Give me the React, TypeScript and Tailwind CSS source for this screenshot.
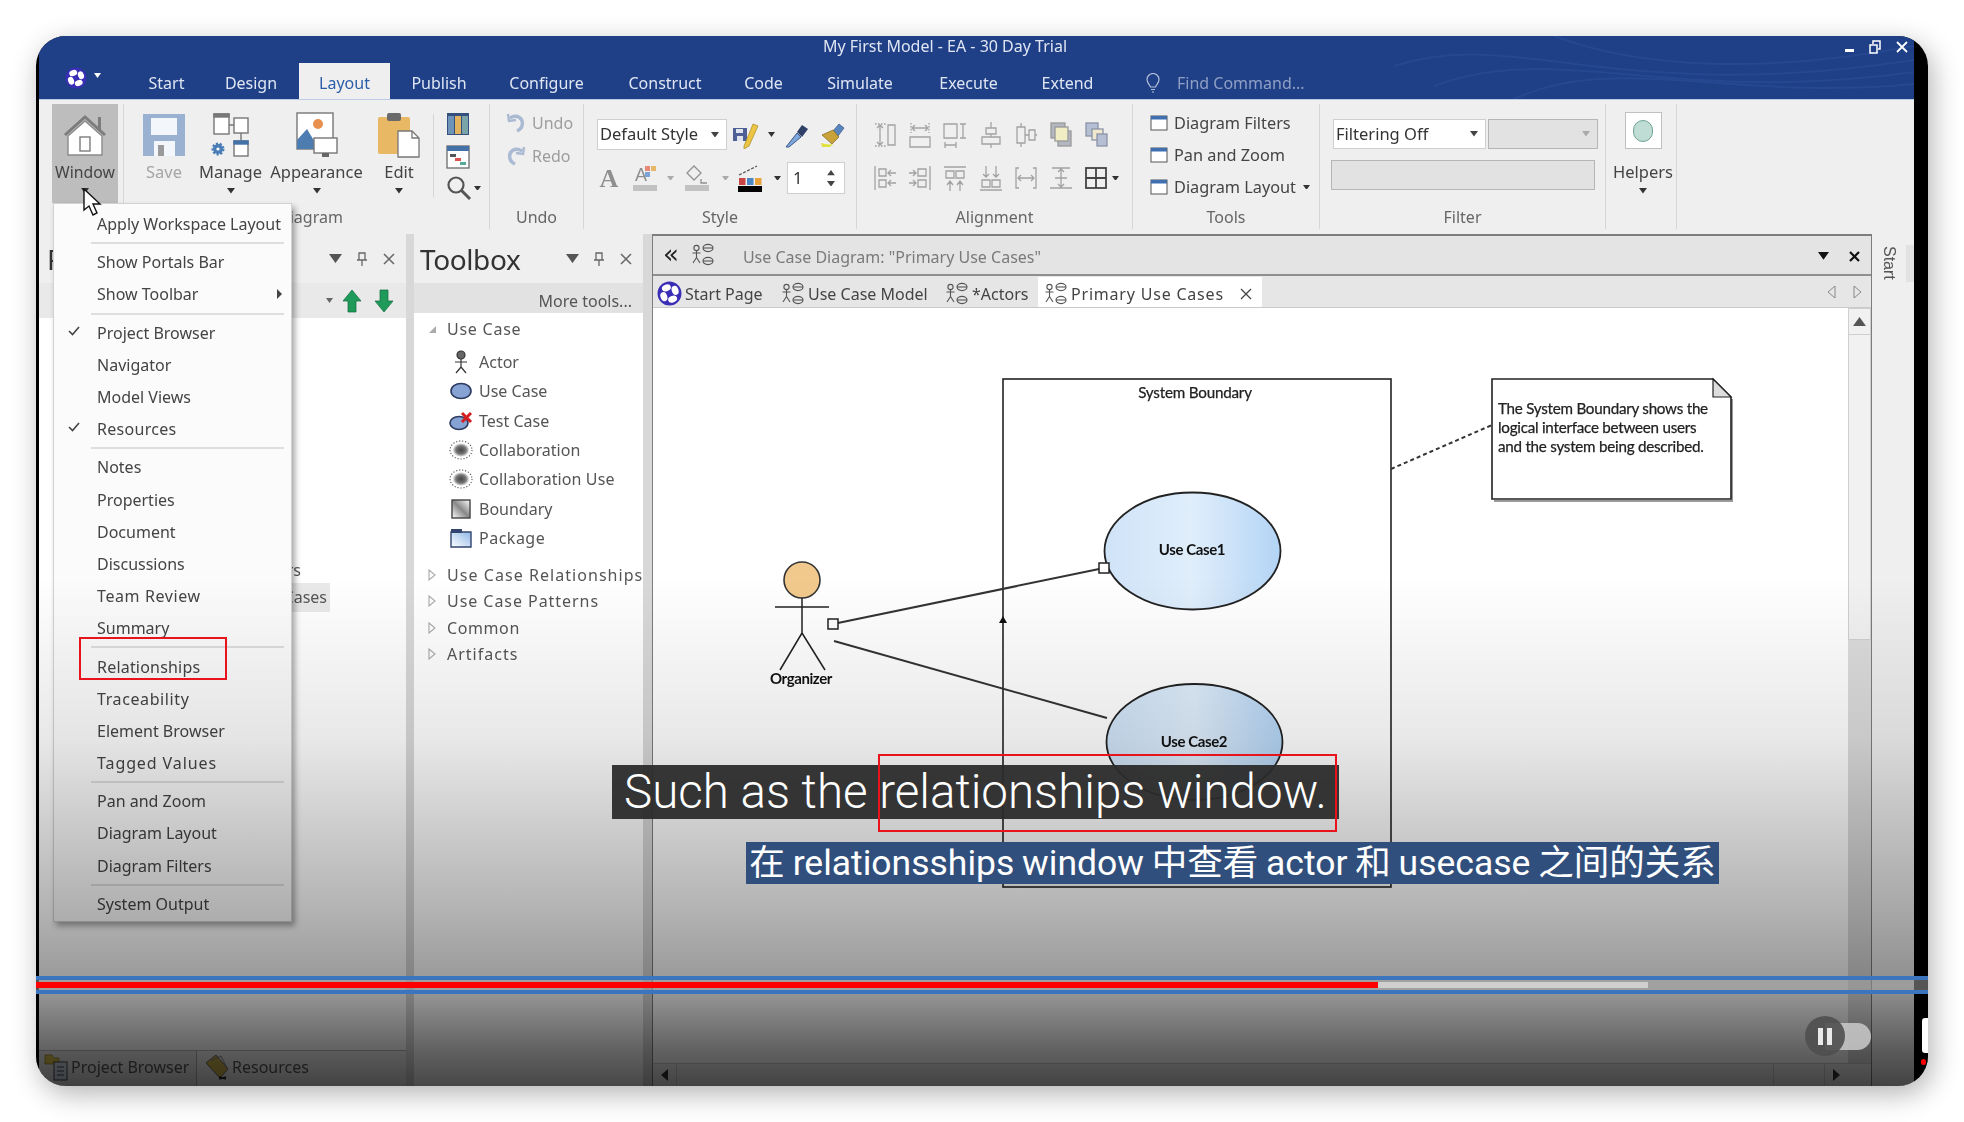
import type { ReactNode } from 'react'

const UI = "font-['Noto_Sans',sans-serif]"

// ── Small drawings ────────────────────────────────────────────────────────────

function Caret({ color = '#333', size = 8 }: { color?: string; size?: number }) {
  return (
    <svg width={size} height={size * 0.7} viewBox="0 0 8 5.6" className="shrink-0">
      <path d="M0 0h8L4 5.6z" fill={color} />
    </svg>
  )
}

function EaLogo({ size = 24 }: { size?: number }) {
  return (
    <svg width={size} height={size} viewBox="0 0 24 24" className="shrink-0">
      <circle cx="12" cy="12" r="11.5" fill="#3b2eb6" />
      <g fill="#fff">
        <ellipse cx="9" cy="6.6" rx="4.4" ry="3.2" transform="rotate(-20 9 6.6)" />
        <ellipse cx="17.4" cy="9" rx="3.2" ry="4.4" transform="rotate(-20 17.4 9)" />
        <ellipse cx="15" cy="17.4" rx="4.4" ry="3.2" transform="rotate(-20 15 17.4)" />
        <ellipse cx="6.6" cy="15" rx="3.2" ry="4.4" transform="rotate(-20 6.6 15)" />
      </g>
    </svg>
  )
}

function DiagIcon({ size = 24 }: { size?: number }) {
  return (
    <svg width={size} height={size} viewBox="0 0 24 24" className="shrink-0" fill="none" stroke="#555" strokeWidth="1.1">
      <circle cx="5.5" cy="5" r="2.6" />
      <path d="M5.5 7.6v7M1.5 10h8M5.5 14.5L2 20M5.5 14.5L9 20" />
      <ellipse cx="17" cy="5" rx="5" ry="3.6" />
      <path d="M12 5h10" />
      <ellipse cx="17" cy="18" rx="5" ry="3.6" />
      <path d="M12 18h10" />
    </svg>
  )
}

function WinIcon() {
  return (
    <svg width="18" height="18" viewBox="0 0 18 18" className="shrink-0">
      <rect x="1" y="2" width="16" height="14" fill="#fff" stroke="#555" />
      <rect x="1" y="2" width="16" height="3.5" fill="#3f6fb0" />
    </svg>
  )
}

const AlignTop: ReactNode[] = [
  <>
    <path d="M2 4h11M2 26h11" strokeDasharray="1.6 1.4" />
    <path d="M7 5v20M4 8l3-3 3 3M4 22l3 3 3-3M15 5h7v20h-7z" />
  </>,
  <>
    <path d="M3 3v10M21 3v10" strokeDasharray="1.6 1.4" />
    <path d="M4 8h16M7 5l-3 3 3 3M17 5l3 3-3 3M2 17h20v10H2z" />
  </>,
  <path d="M1 4h13v14H1zM17 4h6M20 4v14M17 18h6M2 22v6M13 22v6M2 25h11" />,
  <path d="M12 2v6M12 14v3M12 24v4M7 8h10v6H7zM3 17h18v7H3z" />,
  <path d="M7 3v4M7 23v4M3 7h8v16H3zM11 15h4M15 10h6v10h-6zM21 15h2" />,
  <>
    <rect x="2" y="3" width="14" height="15" fill="#b3b7c0" stroke="#999" />
    <rect x="9" y="11" width="13" height="15" fill="#b3b7c0" stroke="#999" />
    <rect x="6" y="7" width="13" height="14" fill="#f0ecc4" stroke="#999" />
  </>,
  <>
    <rect x="2" y="3" width="12" height="13" fill="#b4bfd4" stroke="#8a93a6" />
    <rect x="8" y="9" width="11" height="11" fill="#efe8cf" stroke="#8a93a6" />
    <rect x="13" y="14" width="10" height="12" fill="#b4bfd4" stroke="#8a93a6" />
  </>,
]
const AlignBottom: ReactNode[] = [
  <path d="M2 3v24M6 6h7v7H6zM6 17h7v7H6zM15 10h8M15 20h8M18 7l-3 3 3 3M18 17l-3 3 3 3" />,
  <path d="M22 3v24M10 6h8v7h-8zM10 17h8v7h-8zM1 10h7M1 20h7M5 7l3 3-3 3M5 17l3 3-3 3" />,
  <path d="M1 4h22M3 8h8v7H3zM13 8h8v7h-8zM7 18v10M17 18v10M4 22l3-4 3 4M14 22l3-4 3 4" />,
  <path d="M1 27h22M3 17h8v7H3zM13 17h8v7h-8zM7 3v11M17 3v11M4 11l3 3 3-3M14 11l3 3 3-3" />,
  <path d="M5 5H2v20h3M19 5h3v20h-3M4 15h16M7 12l-3 3 3 3M17 12l3 3-3 3" />,
  <path d="M3 5h3l6 0 6 0h3M1 25h22M12 6v18M9 9l3-3 3 3M9 21l3 3 3-3M6 15h12" />,
]

function AlignIcon({ children }: { children: ReactNode }) {
  return (
    <svg width="24" height="30" viewBox="0 0 24 30" fill="none" stroke="#a2a2a2" strokeWidth="1.3" className="shrink-0">
      {children}
    </svg>
  )
}

function LargeButton({ label, width, icon, muted, caret = true, small }: { label: string; width: number; icon: ReactNode; muted?: boolean; caret?: boolean; small?: boolean }) {
  return (
    <div style={{ width }} className="flex flex-col items-center pt-[9px] shrink-0">
      <div className="h-[44px] flex items-center justify-center">{icon}</div>
      <div className={`mt-[4px] h-[22px] leading-[22px] whitespace-nowrap ${small ? 'text-[15.8px]' : 'text-[16.5px]'} ${muted ? 'text-[#a5a5a5]' : 'text-[#444]'}`}>{label}</div>
      {caret && <div className="mt-[5px]"><Caret /></div>}
    </div>
  )
}

function Group({ width, label, pl = 0, children }: { width: number; label?: string; pl?: number; children: ReactNode }) {
  return (
    <div style={{ width }} className="shrink-0 mt-[4px] mb-[6px] h-[125px] border-r border-[#d6d6d6] flex flex-col">
      <div className="h-[103px]">{children}</div>
      <div style={{ paddingLeft: pl }} className="h-[21px] leading-[21px] text-center text-[16px] text-[#666]">{label}</div>
    </div>
  )
}

function Combo({ text, width, disabled, h = 30 }: { text?: string; width: number; disabled?: boolean; h?: number }) {
  return (
    <div
      style={{ width, height: h }}
      className={`shrink-0 flex items-center justify-between pl-[2px] pr-[7px] border text-[16.5px] text-[#333] ${disabled ? 'bg-[#e2e2e2] border-[#b5b5b5]' : 'bg-white border-[#cfcfcf]'}`}
    >
      <span className="whitespace-nowrap">{text}</span>
      <Caret color={disabled ? '#aaa' : '#444'} />
    </div>
  )
}

// ── Title bar ─────────────────────────────────────────────────────────────────

const ribbonTabs: [string, number][] = [
  ['Start', 73], ['Design', 96], ['Layout', 91], ['Publish', 98], ['Configure', 117],
  ['Construct', 120], ['Code', 77], ['Simulate', 116], ['Execute', 101], ['Extend', 97],
]

function TitleBar() {
  return (
    <div className="relative h-[63px] bg-[#1f3f87] shrink-0 overflow-hidden">
      <svg className="absolute right-0 top-0" width="520" height="63" viewBox="0 0 520 63" fill="none" stroke="#264890" strokeWidth="2">
        <path d="M0 30C120 -10 220 70 520 24" />
        <path d="M40 50C160 4 280 70 520 36" />
        <path d="M120 63C220 16 340 66 520 48" />
        <path d="M160 0C240 30 360 40 520 10" />
      </svg>
      <div className="relative h-[27px] flex items-start justify-center pr-[63px] leading-[21px] text-[16px] text-[#dfe6f2]">
        My First Model - EA - 30 Day Trial
        <div className="absolute right-[6px] top-0 h-[22px] flex items-center gap-[15px] text-white">
          <div className="w-[9px] h-[3px] bg-white mt-[6px]" />
          <svg width="12" height="14" viewBox="0 0 12 14" fill="none" stroke="#fff" strokeWidth="1.5">
            <rect x="1" y="5" width="7" height="8" />
            <path d="M4 4V1h7v8H9" />
          </svg>
          <svg width="12" height="12" viewBox="0 0 12 12" stroke="#fff" strokeWidth="1.8"><path d="M1 1l10 10M11 1L1 11" /></svg>
        </div>
      </div>
      <div className="relative h-[36px] flex text-[16px] text-[#dfe6f2]">
        <div className="w-[91px] shrink-0 flex items-start pl-[26px] pt-[4px] gap-[7px]">
          <EaLogo size={22} />
          <div className="mt-[6px]"><Caret color="#fff" size={7} /></div>
        </div>
        {ribbonTabs.map(([name, w]) => (
          <div
            key={name}
            style={{ width: w }}
            className={`shrink-0 h-[36px] pt-[4px] flex items-center justify-center ${name === 'Layout' ? 'bg-[#efefef] text-[#2b5da8]' : ''}`}
          >
            {name}
          </div>
        ))}
        <div className="flex items-center pt-[3px] ml-[30px] text-[#8fa0c4]">
          <svg width="14" height="20" viewBox="0 0 14 20" fill="none" stroke="#b5c1da" strokeWidth="1.2">
            <path d="M4.5 14C3.5 11 1 10 1 6.5a6 6 0 0112 0C13 10 10.5 11 9.5 14zM5 16.5h4M6 19h2" />
          </svg>
          <span className="ml-[17px] text-[16px]">Find Command...</span>
        </div>
      </div>
    </div>
  )
}

// ── Ribbon ────────────────────────────────────────────────────────────────────

function Ribbon() {
  return (
    <div className="h-[135px] shrink-0 bg-[#efefef] flex border-t border-[#b9cbe6] items-start">
      <Group width={85} label="">
        <div className="ml-[13px] mt-[2px] w-[66px] h-[99px] bg-[#bdbdbd]">
          <div className="-mt-[2px]">
            <LargeButton
              label="Window"
              width={66}
              small
              icon={
                <svg width="44" height="44" viewBox="0 0 44 44">
                  <path d="M2 22L22 4l20 18" fill="none" stroke="#7c7c7c" strokeWidth="3" />
                  <path d="M35 4h3v14l-3-3z" fill="#7c7c7c" />
                  <path d="M5 23L22 8l17 15v19H5z" fill="#fff" stroke="#8a8a8a" strokeWidth="1.4" />
                  <rect x="17" y="24" width="10" height="14" fill="none" stroke="#7c7c7c" strokeWidth="1.4" />
                </svg>
              }
            />
          </div>
        </div>
      </Group>

      <Group width={366} label="Diagram" pl={8}>
        <div className="flex pl-[6px]">
          <LargeButton
            label="Save"
            width={68}
            muted
            caret={false}
            icon={
              <svg width="42" height="42" viewBox="0 0 42 42">
                <path d="M0 0h42v42H0z" fill="#9ab1d1" />
                <rect x="8" y="4" width="26" height="17" fill="#f3f6fa" />
                <rect x="11" y="27" width="21" height="15" fill="#f3f6fa" />
                <rect x="15" y="31" width="6" height="11" fill="#9a9a9a" />
              </svg>
            }
          />
          <LargeButton
            label="Manage"
            width={65}
            icon={
              <svg width="42" height="44" viewBox="0 0 42 44" fill="#fff" stroke="#777" strokeWidth="1.4">
                <rect x="4" y="1" width="15" height="20" />
                <rect x="4" y="1" width="15" height="3" fill="#7a7a7a" />
                <rect x="24" y="5" width="14" height="15" />
                <path d="M19 12h5M31 20v9" fill="none" />
                <rect x="24" y="28" width="14" height="15" />
                <rect x="24" y="28" width="14" height="3" fill="#4472a8" stroke="#4472a8" />
                <circle cx="8" cy="36" r="5" fill="#4a7db5" stroke="#4a7db5" strokeWidth="3" strokeDasharray="2 1.5" />
                <circle cx="8" cy="36" r="1.6" fill="#fff" stroke="none" />
              </svg>
            }
          />
          <LargeButton
            label="Appearance"
            width={107}
            icon={
              <svg width="42" height="46" viewBox="0 0 42 46">
                <rect x="1" y="1" width="36" height="36" fill="#fff" stroke="#777" strokeWidth="1.4" />
                <circle cx="22" cy="12" r="5" fill="#e8914f" />
                <path d="M1 37V28l10-11 12 20z" fill="#4d7cb0" />
                <rect x="18" y="26" width="23" height="15" fill="#fff" stroke="#777" strokeWidth="1.4" />
                <rect x="26" y="41" width="7" height="4" fill="#666" />
              </svg>
            }
          />
          <LargeButton
            label="Edit"
            width={58}
            icon={
              <svg width="42" height="46" viewBox="0 0 42 46">
                <rect x="0" y="5" width="32" height="37" rx="2" fill="#e8b864" />
                <rect x="9" y="1" width="14" height="8" rx="2" fill="#6a6a6a" />
                <path d="M20 19h14l7 7v19H20z" fill="#fff" stroke="#777" strokeWidth="1.3" />
                <path d="M34 19v7h7" fill="none" stroke="#777" strokeWidth="1.3" />
              </svg>
            }
          />
          <div className="ml-[5px] mt-[10px] w-px h-[83px] bg-[#d6d6d6]" />
          <div className="ml-[12px] flex flex-col items-start">
            <svg className="mt-[8px]" width="24" height="24" viewBox="0 0 24 24">
              <rect x="1" y="1" width="22" height="22" fill="#34507c" />
              <rect x="2" y="4" width="6" height="18" fill="#6d93b8" />
              <rect x="9" y="4" width="6" height="18" fill="#e3b25e" />
              <rect x="16" y="4" width="6" height="18" fill="#7aa4a8" />
            </svg>
            <svg className="mt-[9px]" width="24" height="24" viewBox="0 0 24 24">
              <rect x="1" y="1" width="22" height="22" fill="#fff" stroke="#6a6a6a" strokeWidth="1.3" />
              <rect x="1" y="1" width="22" height="5" fill="#4472a8" />
              <rect x="4" y="9" width="6" height="3" fill="#555" />
              <rect x="9" y="13" width="6" height="3" fill="#d9534f" />
              <rect x="14" y="17" width="6" height="3" fill="#5a9" />
            </svg>
            <div className="mt-[6px] flex items-center gap-[2px]">
              <svg width="26" height="26" viewBox="0 0 26 26" fill="none" stroke="#555" strokeWidth="2.2">
                <circle cx="10" cy="10" r="7.5" />
                <path d="M15.5 15.5L24 24" strokeWidth="3" />
              </svg>
              <Caret size={7} />
            </div>
          </div>
        </div>
      </Group>

      <Group width={94} label="Undo">
        <div className="pt-[2px] pl-[16px] text-[16px] text-[#9d9d9d]">
          {['Undo', 'Redo'].map((t, i) => (
            <div key={t} className="h-[33px] flex items-center gap-[6px]">
              <svg width="20" height="22" viewBox="0 0 20 22" fill="none" stroke="#a9bad2" strokeWidth="3.4" style={i ? { transform: 'scaleX(-1)' } : undefined}>
                <path d="M4 6c7-4 14 0 12 8-.6 2.4-3 4-5 5" />
                <path d="M2 2l1 7 7-1" strokeWidth="2.4" />
              </svg>
              {t}
            </div>
          ))}
        </div>
      </Group>

      <Group width={273} label="Style" pl={0}>
        <div className="pt-[15px] pl-[13px] flex items-center h-[46px]">
          <Combo text="Default Style" width={130} h={31} />
          <svg className="ml-[6px]" width="26" height="28" viewBox="0 0 26 28">
            <path d="M0 7h14v13H0z" fill="#4d5f95" />
            <rect x="3" y="8" width="7" height="4" fill="#dfe3ee" />
            <rect x="4" y="15" width="6" height="5" fill="#dfe3ee" />
            <path d="M11 25L20 3l5 2-9 20-5 3z" fill="#ecc544" stroke="#a88a20" strokeWidth=".7" />
          </svg>
          <div className="ml-[9px]"><Caret size={7} /></div>
          <svg className="ml-[10px]" width="24" height="26" viewBox="0 0 24 26">
            <path d="M1 25L12 11l4 4L4 25z" fill="#7fa7dc" stroke="#3c5a88" />
            <path d="M12 10l5-7 6 4-6 8z" fill="#2f3f66" />
          </svg>
          <svg className="ml-[10px]" width="26" height="26" viewBox="0 0 26 26">
            <path d="M14 9l6-7 5 4-6 8z" fill="#5a86c0" stroke="#34507c" strokeWidth=".7" />
            <path d="M3 13l11-5 6 7-7 7z" fill="#c9a33a" stroke="#7d6620" strokeWidth=".7" />
            <path d="M2 21c4 1 8 2 12 1l-3 3H3z" fill="#dfe23f" />
          </svg>
        </div>
        <div className="mt-[12px] pl-[13px] flex items-center h-[32px]">
          <span className="w-[24px] text-center text-[#8f8f8f] text-[26px] font-bold font-['Liberation_Serif',serif]">A</span>
          <div className="ml-[12px] w-[24px] flex flex-col items-center relative">
            <span className="-ml-[8px] text-[#8f8f8f] text-[18px] leading-[20px] font-['Liberation_Sans',sans-serif]">A</span>
            <div className="absolute right-[1px] top-[1px] grid grid-cols-2 gap-[1px]">
              <div className="w-[5px] h-[5px] bg-[#e88a78]" />
              <div className="w-[5px] h-[5px] bg-[#e8b86a]" />
              <div className="w-[5px] h-[5px] bg-[#7aa4d8]" />
            </div>
            <div className="w-[24px] h-[6px] bg-[#c2c2c2]" />
          </div>
          <div className="ml-[10px]"><Caret color="#aaa" size={7} /></div>
          <div className="ml-[11px] w-[24px] flex flex-col items-center gap-[1px]">
            <svg width="22" height="19" viewBox="0 0 22 19" fill="none" stroke="#909090" strokeWidth="1.3"><path d="M8 1L1 8l7 7 7-7zM15 14v4h6" /></svg>
            <div className="w-[24px] h-[6px] bg-[#c2c2c2]" />
          </div>
          <div className="ml-[13px]"><Caret color="#aaa" size={7} /></div>
          <div className="ml-[9px] w-[24px] flex flex-col items-center">
            <svg width="24" height="21" viewBox="0 0 24 21">
              <path d="M1 10L19 1" stroke="#555" strokeWidth="1.2" strokeDasharray="3 1.5" />
              <rect x="1" y="13" width="6.5" height="7" fill="#c94545" />
              <rect x="9" y="13" width="6.5" height="7" fill="#4d86c4" />
              <rect x="17" y="13" width="6.5" height="7" fill="#e8a33d" />
            </svg>
            <div className="w-[24px] h-[6px] bg-black" />
          </div>
          <div className="ml-[12px]"><Caret size={7} /></div>
          <div className="ml-[6px] w-[58px] h-[32px] bg-white border border-[#cfcfcf] flex items-center justify-between pl-[5px] pr-[9px] text-[16.5px] text-[#333]">
            1
            <div className="flex flex-col gap-[5px]">
              <div className="rotate-180"><Caret size={8} color="#444" /></div>
              <Caret size={8} color="#444" />
            </div>
          </div>
        </div>
      </Group>

      <Group width={276} label="Alignment">
        <div className="pl-[16px] pt-[16px] flex flex-col gap-[13px]">
          <div className="flex gap-[11.2px]">{AlignTop.map((d, i) => <AlignIcon key={i}>{d}</AlignIcon>)}</div>
          <div className="flex items-center gap-[11.2px]">
            {AlignBottom.map((d, i) => <AlignIcon key={i}>{d}</AlignIcon>)}
            <div className="flex items-center gap-[4px]">
              <svg width="24" height="24" viewBox="0 0 24 24" fill="none" stroke="#444" strokeWidth="1.8"><rect x="2" y="2" width="20" height="20" /><path d="M12 2v20M2 12h20" /></svg>
              <Caret size={7} />
            </div>
          </div>
        </div>
      </Group>

      <Group width={187} label="Tools">
        <div className="pt-[3px] pl-[17px]">
          {['Diagram Filters', 'Pan and Zoom', 'Diagram Layout'].map((t, i) => (
            <div key={t} className="h-[32px] flex items-center gap-[6px] text-[16.3px] text-[#444] whitespace-nowrap">
              <WinIcon />
              {t}
              {i === 2 && <div className="ml-[1px]"><Caret size={7} /></div>}
            </div>
          ))}
        </div>
      </Group>

      <Group width={286} label="Filter">
        <div className="pt-[15px] pl-[13px]">
          <div className="flex gap-[2px]">
            <Combo text="Filtering Off" width={153} />
            <Combo width={110} disabled />
          </div>
          <div className="-ml-[2px] mt-[11px] w-[264px] h-[30px] bg-[#e2e2e2] border border-[#b5b5b5]" />
        </div>
      </Group>

      <Group width={71} label="">
        <div className="flex flex-col items-center pl-[4px] pt-[8px]">
          <div className="w-[37px] h-[37px] bg-white border border-[#c0c0c0] flex items-center justify-center">
            <div className="w-[20px] h-[22px] rounded-full bg-[#bfdcd5] border border-[#6fa394]" />
          </div>
          <div className="mt-[12px] h-[22px] leading-[22px] text-[16.5px] text-[#444]">Helpers</div>
          <div className="mt-[5px]"><Caret /></div>
        </div>
      </Group>
    </div>
  )
}

// ── Window menu ───────────────────────────────────────────────────────────────

type MenuEntry = { t: string; check?: boolean; sub?: boolean; ls?: number }

const menuGroups: MenuEntry[][] = [
  [{ t: 'Apply Workspace Layout' }],
  [{ t: 'Show Portals Bar' }, { t: 'Show Toolbar', sub: true }],
  [{ t: 'Project Browser', check: true }, { t: 'Navigator' }, { t: 'Model Views' }, { t: 'Resources', check: true, ls: 0.3 }],
  [{ t: 'Notes' }, { t: 'Properties' }, { t: 'Document' }, { t: 'Discussions' }, { t: 'Team Review', ls: 0.6 }, { t: 'Summary' }],
  [{ t: 'Relationships', ls: 0.2 }, { t: 'Traceability', ls: 0.6 }, { t: 'Element Browser' }, { t: 'Tagged Values', ls: 0.9 }],
  [{ t: 'Pan and Zoom' }, { t: 'Diagram Layout' }, { t: 'Diagram Filters' }],
  [{ t: 'System Output' }],
]

function WindowMenu() {
  return (
    <div className={`absolute left-[17px] top-[167px] w-[239px] h-[719px] bg-[#fbfbfb] border border-[#d2d2d2] shadow-[3px_4px_6px_rgba(0,0,0,0.35)] pt-[4px] blur-[0.5px] ${UI}`}>
      {menuGroups.map((g, gi) => (
        <div key={gi}>
          {gi > 0 && <div className="h-[6px] flex items-center pl-[37px] pr-[7px]"><div className="w-full h-[2px] bg-[#dedede]" /></div>}
          {g.map(item => (
            <div key={item.t} style={item.ls ? { letterSpacing: item.ls } : undefined} className="h-[32.2px] relative flex items-center pl-[43px] text-[16px] text-[#444] whitespace-nowrap">
              {item.check && (
                <svg className="absolute left-[14px] top-[9px]" width="12" height="10" viewBox="0 0 12 10" fill="none" stroke="#444" strokeWidth="1.6"><path d="M1 5l3.5 3.5L11 1" /></svg>
              )}
              {item.t}
              {item.sub && <div className="absolute right-[9px] top-[11px] w-0 h-0 border-y-[5px] border-y-transparent border-l-[5px] border-l-[#444]" />}
            </div>
          ))}
        </div>
      ))}
    </div>
  )
}

// ── Docked panels ─────────────────────────────────────────────────────────────

function PanelControls() {
  return (
    <div className="flex items-center">
      <Caret color="#555" size={13} />
      <svg className="ml-[14px]" width="12" height="14" viewBox="0 0 12 14" fill="none" stroke="#666" strokeWidth="1.3"><path d="M3 1h6v7H3zM1 8h10M6 8v6" /></svg>
      <svg className="ml-[15px]" width="12" height="12" viewBox="0 0 12 12" stroke="#666" strokeWidth="1.5"><path d="M1 1l10 10M11 1L1 11" /></svg>
    </div>
  )
}

function BrowserPanel() {
  return (
    <div className="w-[367px] shrink-0 flex flex-col">
      <div className="h-[49px] shrink-0 flex items-center justify-between pl-[8px] pr-[11px]">
        <span className="text-[28px] text-[#333]">P</span>
        <PanelControls />
      </div>
      <div className="h-[35px] shrink-0 bg-[#e9e9e9] flex items-center pl-[287px]">
        <Caret color="#666" size={7} />
        <svg className="ml-[8px]" width="22" height="24" viewBox="0 0 22 24"><path d="M11 1L20 12H15V23H7V12H2z" fill="#1f9a5a" stroke="#0f6a3a" strokeWidth=".7" /></svg>
        <svg className="ml-[10px]" width="22" height="24" viewBox="0 0 22 24"><path d="M11 23L20 12H15V1H7V12H2z" fill="#1f9a5a" stroke="#0f6a3a" strokeWidth=".7" /></svg>
      </div>
      <div className="flex-1 bg-white pt-[239px] pr-[76px] text-[16px] text-[#555] text-right">
        <div className="h-[26px] leading-[26px] pr-[29px]">Actors</div>
        <div className="ml-auto w-fit h-[29px] leading-[29px] bg-[#e9e9e9] pl-[8px] pr-[3px]">Primary Use Cases</div>
      </div>
      <div className="h-[36px] shrink-0 bg-[#efefef] border-t border-[#bbb] flex text-[16px] text-[#555] whitespace-nowrap">
        <div className="w-[158px] flex items-center pl-[5px] pb-[4px] gap-[3px] border-r border-[#aaa] bg-[#e6e6e6]">
          <svg width="24" height="28" viewBox="0 0 24 28">
            <path d="M1 2h7l2 3h5v6H1z" fill="#d8bf4a" stroke="#8a7a2a" strokeWidth=".7" />
            <rect x="10" y="9" width="13" height="18" fill="#cfd8e6" stroke="#444" />
            <path d="M13 14h7M13 18h7M13 22h7" stroke="#444" />
          </svg>
          Project Browser
        </div>
        <div className="flex items-center pl-[8px] pb-[4px] gap-[3px]">
          <svg width="24" height="28" viewBox="0 0 24 28">
            <path d="M1 10L11 2l12 14-8 9z" fill="#c9b04a" stroke="#666" />
            <path d="M6 8l10-5 6 12" fill="none" stroke="#888" />
            <path d="M14 24l7 2M21 24l-7 2" stroke="#222" strokeWidth="1.6" />
          </svg>
          Resources
        </div>
      </div>
    </div>
  )
}

function CollabIcon({ id }: { id: string }) {
  return (
    <svg width="24" height="20" viewBox="0 0 24 20">
      <defs>
        <radialGradient id={id}>
          <stop offset="0" stopColor="#444" />
          <stop offset="0.6" stopColor="#777" />
          <stop offset="1" stopColor="#fff" />
        </radialGradient>
      </defs>
      <ellipse cx="12" cy="10" rx="11" ry="9" fill="none" stroke="#555" strokeWidth="1.1" strokeDasharray="1.2 1.8" />
      <ellipse cx="12" cy="10" rx="8.5" ry="7" fill={`url(#${id})`} />
    </svg>
  )
}

const toolboxItems: [string, ReactNode, number?][] = [
  ['Actor', (
    <svg width="16" height="24" viewBox="0 0 16 24" fill="none" stroke="#333" strokeWidth="1.2">
      <circle cx="8" cy="5" r="4" fill="#666" />
      <path d="M8 9v8M2 12h12M8 17l-5 6M8 17l5 6" />
    </svg>
  )],
  ['Use Case', (
    <svg width="22" height="18" viewBox="0 0 22 18"><ellipse cx="11" cy="9" rx="10" ry="7.5" fill="#86a3d4" stroke="#2c3a60" strokeWidth="1.6" /></svg>
  )],
  ['Test Case', (
    <svg width="24" height="20" viewBox="0 0 24 20">
      <ellipse cx="10" cy="12" rx="9" ry="6.5" fill="#86a3d4" stroke="#2c3a60" strokeWidth="1.6" />
      <path d="M13 2l9 9M22 2l-9 9" stroke="#d31f1f" strokeWidth="3" />
    </svg>
  )],
  ['Collaboration', <CollabIcon id="col1" />],
  ['Collaboration Use', <CollabIcon id="col2" />, 0.1],
  ['Boundary', (
    <svg width="20" height="20" viewBox="0 0 20 20">
      <defs>
        <linearGradient id="bnd" x1="0" y1="1" x2="1" y2="0">
          <stop offset="0" stopColor="#fff" />
          <stop offset="0.5" stopColor="#888" />
          <stop offset="1" stopColor="#fff" />
        </linearGradient>
      </defs>
      <rect x="1" y="1" width="18" height="18" fill="url(#bnd)" stroke="#444" strokeWidth="1.4" />
    </svg>
  )],
  ['Package', (
    <svg width="22" height="20" viewBox="0 0 22 20">
      <defs>
        <linearGradient id="pkg" x1="0" y1="1" x2="1" y2="0">
          <stop offset="0" stopColor="#fff" />
          <stop offset="1" stopColor="#8fb8e8" />
        </linearGradient>
      </defs>
      <path d="M1 4h20v15H1z" fill="url(#pkg)" stroke="#33456e" strokeWidth="1.4" />
      <path d="M1 1h11v4H1z" fill="#33456e" />
    </svg>
  ), 0.5],
]

function Expander({ open }: { open?: boolean }) {
  return open ? (
    <svg width="9" height="9" viewBox="0 0 9 9" className="shrink-0"><path d="M8 1v7H1z" fill="#aaa" /></svg>
  ) : (
    <svg width="8" height="12" viewBox="0 0 8 12" fill="none" stroke="#aaa" strokeWidth="1.1" className="shrink-0"><path d="M1 1l6 5-6 5z" /></svg>
  )
}

const toolboxSections: [string, number][] = [
  ['Use Case Relationships', 1.05],
  ['Use Case Patterns', 0.95],
  ['Common', 0.6],
  ['Artifacts', 1],
]

function ToolboxPanel() {
  return (
    <div className="w-[229px] shrink-0 flex flex-col overflow-hidden">
      <div className="h-[49px] shrink-0 flex items-center justify-between pl-[6px] pr-[11px]">
        <span className="text-[28px] text-[#333] tracking-[-0.4px]">Toolbox</span>
        <PanelControls />
      </div>
      <div className="h-[30px] shrink-0 bg-[#e2e2e2] flex items-center justify-end pr-[11px] pt-[6px] text-[16px] text-[#555]">More tools...</div>
      <div className="flex-1 bg-white text-[16px] text-[#555] whitespace-nowrap">
        <div className="h-[34.5px] flex items-center pl-[14px] gap-[10px] pb-[2px] tracking-[0.75px]">
          <Expander open />
          Use Case
        </div>
        {toolboxItems.map(([name, icon, ls]) => (
          <div key={name} style={ls ? { letterSpacing: ls } : undefined} className="h-[29.3px] flex items-center">
            <div className="w-[65px] pl-[30px] pr-[1px] flex items-center justify-center shrink-0">{icon}</div>
            {name}
          </div>
        ))}
        <div className="h-[9px]" />
        {toolboxSections.map(([t, ls]) => (
          <div key={t} style={{ letterSpacing: ls }} className="h-[26.4px] flex items-center pl-[14px] gap-[11px]">
            <Expander />
            {t}
          </div>
        ))}
      </div>
    </div>
  )
}

// ── Diagram ───────────────────────────────────────────────────────────────────

const docTabs: { t: string; w: number }[] = [
  { t: 'Use Case Model', w: 164 },
  { t: '*Actors', w: 98 },
]

function DiagramCanvas() {
  const nodeFont = "font-['Lato',sans-serif]"
  return (
    <div className="flex-1 relative bg-white overflow-hidden">
      <svg className={`absolute inset-0 ${nodeFont}`} width="1196" height="752" viewBox="653 308 1196 752">
        <defs>
          <linearGradient id="uc" x1="0" x2="1" y1="0" y2="0">
            <stop offset="0" stopColor="#cfe3f8" />
            <stop offset="0.5" stopColor="#e0eefb" />
            <stop offset="1" stopColor="#b3d4f5" />
          </linearGradient>
        </defs>
        <rect x="1003" y="379" width="388" height="508" fill="none" stroke="#222" strokeWidth="1.6" />
        <text x="1195" y="398" textAnchor="middle" fontSize="15.2" fill="#222" stroke="#222" strokeWidth="0.25" letterSpacing="-0.2">System Boundary</text>

        <path d="M1391 469L1492 425" stroke="#333" strokeWidth="2" strokeDasharray="4 3" />
        <path d="M1494 501h238v-102" fill="none" stroke="#999" strokeWidth="2" />
        <path d="M1492 379h221l18 18v102h-239z" fill="#fff" stroke="#222" strokeWidth="1.6" />
        <path d="M1713 379v18h18z" fill="#ddd" stroke="#222" strokeWidth="1.2" />
        <g fontSize="15.2" fill="#222" stroke="#222" strokeWidth="0.25" letterSpacing="-0.25">
          <text x="1498" y="414">The System Boundary shows the</text>
          <text x="1498" y="433">logical interface between users</text>
          <text x="1498" y="452">and the system being described.</text>
        </g>

        <path d="M833 624L1104 568" stroke="#333" strokeWidth="2" />
        <path d="M834 641L1107 718" stroke="#333" strokeWidth="2" />
        <path d="M1003 616l-4 7h8z" fill="#111" />

        <ellipse cx="1192.5" cy="551" rx="88" ry="58.5" fill="url(#uc)" stroke="#222" strokeWidth="1.8" />
        <text x="1192" y="555" textAnchor="middle" fontSize="15" fontWeight="700" fill="#111" letterSpacing="-0.4">Use Case1</text>
        <ellipse cx="1194.5" cy="742" rx="88" ry="58" fill="url(#uc)" stroke="#222" strokeWidth="1.8" />
        <text x="1194" y="747" textAnchor="middle" fontSize="15" fontWeight="700" fill="#111" letterSpacing="-0.4">Use Case2</text>

        <rect x="1099" y="563" width="10" height="10" fill="#fff" stroke="#222" strokeWidth="1.5" />
        <rect x="828" y="619" width="10" height="10" fill="#fff" stroke="#222" strokeWidth="1.5" />

        <ellipse cx="802" cy="580" rx="18" ry="18" fill="#f2c98c" stroke="#333" strokeWidth="1.6" />
        <path d="M775 607h54M802 598v35M802 633L780 670M802 633L825 670" stroke="#222" strokeWidth="1.5" fill="none" />
        <text x="801" y="684" textAnchor="middle" fontSize="15" fontWeight="700" fill="#111" letterSpacing="-0.4">Organizer</text>
      </svg>
    </div>
  )
}

function DiagramPanel() {
  return (
    <div className="w-[1220px] shrink-0 border-x border-t-2 border-[#7d7d7d] flex flex-col">
      <div className="h-[40px] shrink-0 bg-[#e4e4e4] border-b-2 border-[#8f8f8f] flex items-center pl-[10px] pr-[11px] pt-[4px]">
        <span className="text-[26px] leading-none -mt-[6px] text-[#222] font-['DejaVu_Sans',sans-serif]">«</span>
        <div className="ml-[12px] -mt-[4px]"><DiagIcon size={24} /></div>
        <span className="ml-[28px] text-[16px] text-[#7a7a7a]">Use Case Diagram: "Primary Use Cases"</span>
        <div className="ml-auto flex items-center gap-[20px] -mt-[2px]">
          <Caret color="#111" size={11} />
          <svg width="11" height="11" viewBox="0 0 11 11" stroke="#111" strokeWidth="2.2"><path d="M1 1l9 9M10 1l-9 9" /></svg>
        </div>
      </div>
      <div className="h-[32px] shrink-0 bg-[#e6e6e6] border-b border-[#c9c9c9] flex items-end text-[16px] text-[#444]">
        <div className="w-[126px] h-[30px] flex items-center pl-[4px] gap-[3px] pt-[3px]">
          <EaLogo size={25} />
          Start Page
        </div>
        {docTabs.map(d => (
          <div key={d.t} style={{ width: d.w }} className="h-[30px] flex items-center pl-[2px] gap-[3px] whitespace-nowrap pt-[3px]">
            <DiagIcon size={24} />
            {d.t}
          </div>
        ))}
        <div className="w-[224px] h-[30px] -ml-[3px] bg-white flex items-center pl-[6px] gap-[3px] tracking-[0.8px] whitespace-nowrap pt-[3px]">
          <DiagIcon size={24} />
          Primary Use Cases
          <svg className="ml-auto mr-[10px]" width="12" height="12" viewBox="0 0 12 12" stroke="#444" strokeWidth="1.3"><path d="M1 1l10 10M11 1L1 11" /></svg>
        </div>
        <div className="ml-auto h-[30px] flex items-center gap-[17px] pr-[9px]">
          <svg width="9" height="14" viewBox="0 0 9 14" fill="none" stroke="#888"><path d="M8 1L1 7l7 6z" /></svg>
          <svg width="9" height="14" viewBox="0 0 9 14" fill="none" stroke="#888"><path d="M1 1l7 6-7 6z" /></svg>
        </div>
      </div>
      <div className="flex-1 flex flex-col min-h-0">
        <div className="flex-1 flex min-h-0">
          <DiagramCanvas />
          <div className="w-[23px] shrink-0 flex flex-col bg-[#dcdcdc]">
            <div className="h-[27px] shrink-0 bg-[#f1f1f1] border border-[#cfcfcf] flex items-center justify-center"><div className="rotate-180"><Caret size={13} color="#555" /></div></div>
            <div className="h-[305px] shrink-0 bg-[#f1f1f1] border-x border-b border-[#cfcfcf]" />
          </div>
        </div>
        <div className="h-[23px] shrink-0 flex bg-[#f0f0f0] border-t border-[#cfcfcf]">
          <div className="w-[24px] border-r border-[#cfcfcf] flex items-center justify-center"><div className="w-0 h-0 border-y-[6px] border-y-transparent border-r-[7px] border-r-[#333]" /></div>
          <div className="w-[1097px] border-r border-[#cfcfcf]" />
          <div className="ml-auto w-[47px] flex items-center justify-center border-l border-[#cfcfcf] pr-[23px]"><div className="w-0 h-0 border-y-[6px] border-y-transparent border-l-[7px] border-l-[#333]" /></div>
        </div>
      </div>
    </div>
  )
}

function SideRail() {
  return (
    <div className="w-[42px] shrink-0 bg-[#efefef] flex items-start pt-[12px] pl-[5px] relative">
      <span className="[writing-mode:vertical-rl] text-[16px] text-[#555] font-['Liberation_Sans',sans-serif]">Start</span>
      <div className="absolute right-0 top-[11px] w-[8px] h-[37px] bg-[#e2e2e2]" />
    </div>
  )
}

// ── Video overlay ─────────────────────────────────────────────────────────────

function VideoOverlay() {
  return (
    <>
      {/* bottom scrim */}
      <div className="absolute left-0 right-0 bottom-0 h-[510px] bg-[linear-gradient(to_bottom,rgba(0,0,0,0)_0%,rgba(0,0,0,0.09)_32%,rgba(0,0,0,0.3)_66%,rgba(0,0,0,0.42)_82%,rgba(0,0,0,0.62)_93%,rgba(0,0,0,0.72)_100%)]" />

      {/* mouse cursor */}
      <svg className="absolute left-[47px] top-[152px]" width="20" height="28" viewBox="0 0 20 28">
        <path d="M1 1v21l5-4 4 9 4-2-4-9h7z" fill="#fff" stroke="#111" strokeWidth="1.4" />
      </svg>

      {/* highlight round the menu item */}
      <div className="absolute left-[43px] top-[601px] w-[148px] h-[43px] border-2 border-[#e8131b]" />

      {/* captions */}
      <div className="absolute left-[576px] top-[729px] w-[727px] h-[54px] pt-[1px] bg-[#2b2b2b]/95 flex items-center justify-center text-[47.5px] text-white whitespace-nowrap font-['Roboto',sans-serif] font-light">
        Such as the relationships window.
      </div>
      <div className="absolute left-[842px] top-[718px] w-[459px] h-[78px] border-2 border-[#e8131b]" />
      <div className="absolute left-[710px] top-[806px] w-[973px] h-[42px] pt-[2px] bg-[#314f7c] flex items-center justify-center text-[35.5px] text-white whitespace-nowrap font-['Roboto','Noto_Sans_CJK_SC',sans-serif] [word-spacing:-1px]">
        在 relationsships window 中查看 actor 和 usecase 之间的关系
      </div>

      {/* progress bar */}
      <div className="absolute left-0 right-0 top-[940px]">
        <div className="h-[4px] bg-[#3a75bd]" />
        <div className="h-[10px] flex flex-col bg-[#a9a9a9]/50">
          <div className="h-[2px]" />
          <div className="h-[6px] flex">
            <div className="w-[1342px] bg-[#ff0000]" />
            <div className="w-[270px] bg-[#cfcfcf]" />
          </div>
        </div>
        <div className="h-[4px] bg-[#3a75bd]" />
      </div>

      {/* pause control */}
      <div className="absolute left-[1789px] top-[987px] w-[46px] h-[27px] rounded-r-full bg-[#c4c4c4]/90" />
      <div className="absolute left-[1769px] top-[980px] w-[40px] h-[40px] rounded-full bg-[#4f4f4f]/90 flex items-center justify-center gap-[4px]">
        <div className="w-[5px] h-[17px] bg-[#eaeaea]" />
        <div className="w-[5px] h-[17px] bg-[#eaeaea]" />
      </div>
      <div className="absolute right-0 top-[982px] w-[6px] h-[35px] rounded-l-[3px] bg-white" />
      <div className="absolute right-[2px] top-[1023px] w-[5px] h-[6px] rounded-full bg-[#f00]" />
    </>
  )
}

// ── Page ──────────────────────────────────────────────────────────────────────

export default function App() {
  return (
    <div className="w-[1964px] h-[1122px] bg-white pt-[36px] pl-[36px] overflow-hidden">
      <div className="w-[1892px] h-[1050px] rounded-[30px] shadow-[4px_8px_28px_rgba(0,0,0,0.3)]">
        <div className="relative w-[1892px] h-[1050px] rounded-[30px] overflow-hidden bg-black pl-[3px]">
          <div className={`relative w-[1875px] h-[1050px] flex flex-col blur-[0.5px] ${UI}`}>
            <TitleBar />
            <Ribbon />
            <div className="flex-1 flex min-h-0 bg-[#efefef]">
              <BrowserPanel />
              <div className="w-[8px] shrink-0 bg-[#d8d8d8]" />
              <ToolboxPanel />
              <div className="w-[9px] shrink-0 bg-[#d8d8d8]" />
              <DiagramPanel />
              <SideRail />
            </div>
          </div>
          <WindowMenu />
          <VideoOverlay />
        </div>
      </div>
    </div>
  )
}
